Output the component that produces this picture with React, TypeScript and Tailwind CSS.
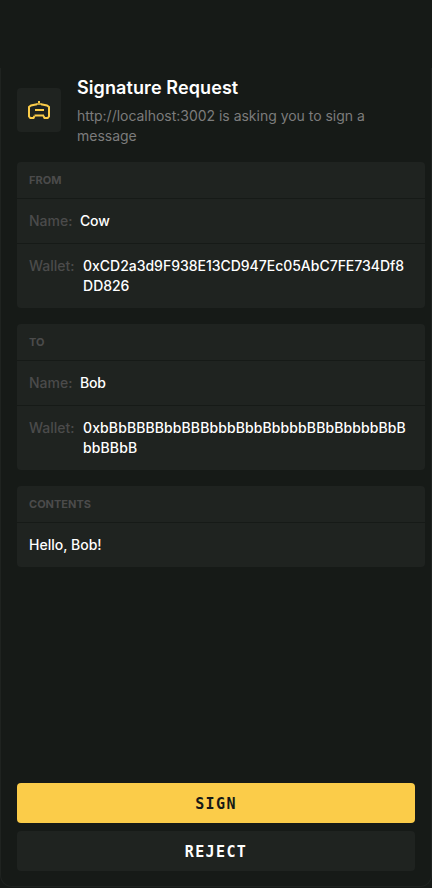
import React from "react";

function BotIcon() {
  return (
    <svg width="24" height="24" viewBox="0 0 24 24" fill="none" stroke="#fbcc49" strokeWidth="2">
      <path d="M11 3h2v2h-2z" fill="#fbcc49" stroke="none" />
      <path d="M8 12h9M7.500 17.500h9.500" />
      <path d="M9.500 6h5" strokeWidth="1.500" />
      <path d="M10 6.200 4 7.500 2 9v9.500L3.300 20H6.500L7.500 18M14 6.200l6 1.300L22 9v9.500L20.700 20H17.500L16.500 18" />
    </svg>
  );
}

function Card({ title, children }: { title: string; children: React.ReactNode }) {
  return (
    <section className="w-[408px] divide-y divide-[#161a17] overflow-hidden rounded bg-[#1f2320]">
      <h2 className="h-[37px] px-3 text-[11px] leading-9 font-bold text-[#4b4b4b]">{title}</h2>
      {children}
    </section>
  );
}

function Row({ label, value, valueClass = "" }: { label?: string; value: string; valueClass?: string }) {
  return (
    <div className="flex gap-2 py-3 pr-4 pl-3 text-sm leading-5 font-medium text-white">
      {label && <span className="shrink-0 text-[#4b4b4b]">{label}</span>}
      <span className={`min-w-0 break-all ${valueClass}`}>{value}</span>
    </div>
  );
}

export default function App() {
  return (
    <div className="h-[888px] w-[432px] overflow-hidden bg-[#161a17] pt-[68px] font-['Inter',sans-serif]">
      <main className="flex h-[819px] flex-col rounded-b-xl border border-t-0 border-[#1f2320] pl-4">
        <header className="flex h-[94px] shrink-0 items-center gap-4 pb-[10px]">
          <div className="flex size-11 shrink-0 items-center justify-center rounded bg-[#1f2320]">
            <BotIcon />
          </div>
          <div className="mt-0.5 w-[320px]">
            <h1 className="text-lg leading-6 font-semibold tracking-[0.1px] text-white">Signature Request</h1>
            <p className="mt-1.5 text-sm leading-5 tracking-[-0.02px] text-[#7c7c7c]">http://localhost:3002 is asking you to sign a message</p>
          </div>
        </header>
        <div className="flex flex-col gap-4">
          <Card title="FROM">
            <Row label="Name:" value="Cow" valueClass="-ml-px pl-[0.5px] tracking-[-0.1px]" />
            <Row label="Wallet:" value="0xCD2a3d9F938E13CD947Ec05AbC7FE734Df8DD826" valueClass="pl-[0.5px] tracking-[-0.02px]" />
          </Card>
          <Card title="TO">
            <Row label="Name:" value="Bob" valueClass="-ml-px pl-[0.5px] tracking-[-0.2px]" />
            <Row label="Wallet:" value="0xbBbBBBBbbBBBbbbBbbBbbbbBBbBbbbbBbBbbBBbB" valueClass="pl-[0.5px] tracking-[0.1px]" />
          </Card>
          <Card title="CONTENTS">
            <Row value="Hello, Bob!" />
          </Card>
        </div>
        <div className="mt-auto mr-4 mb-[15px] flex flex-col gap-2 font-['DejaVu_Sans_Mono',monospace] text-[15px] font-bold tracking-[1.4px]">
          <button className="h-10 rounded bg-[#fbcc49] pt-0.5 text-[#161a17]">SIGN</button>
          <button className="h-10 rounded bg-[#1f2320] pt-0.5 text-white">REJECT</button>
        </div>
      </main>
    </div>
  );
}
